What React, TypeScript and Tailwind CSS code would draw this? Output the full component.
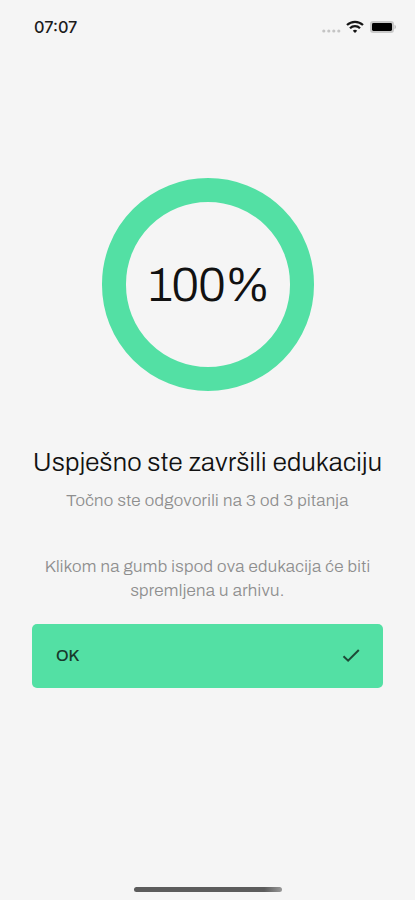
const score = { correct: 3, total: 3 };

function StatusBar() {
  return (
    <header className="flex h-[54px] items-center justify-between pl-[34px] pr-[19px]">
      <span className="font-[Inter,sans-serif] text-[16.3px] font-medium leading-none text-[#1c1c1c]">07:07</span>
      <svg className="h-[14px] w-[75px]" viewBox="0 0 75 14" fill="none">
        <g fill="#c4c4c4">
          <circle cx="2.8" cy="11" r="1.6" />
          <circle cx="7.8" cy="11" r="1.6" />
          <circle cx="12.8" cy="11" r="1.6" />
          <circle cx="17.8" cy="11" r="1.6" />
        </g>
        <path d="M26 5a11.6 11.6 0 0 1 16 0M29 8.2a7 7 0 0 1 10 0" stroke="#151515" strokeWidth="2.2" />
        <path d="M31.8 10.7a3.2 3.2 0 0 1 4.4 0L34 13z" fill="#151515" />
        <rect x="49" y="1" width="24" height="12" rx="3.2" fill="#c8c8c8" />
        <rect x="51" y="3" width="20" height="8" rx="1.4" fill="#000" />
        <path d="M73.6 4.8v4.4c1.6-.7 1.6-3.7 0-4.4" fill="#b0b0b0" />
      </svg>
    </header>
  );
}

function ScoreRing({ percent }: { percent: number }) {
  return (
    <div className="flex h-[213px] w-[212px] items-center justify-center rounded-full border-[24px] border-[#53e0a4]">
      <span className="pl-[3px] text-[48px] font-light leading-none tracking-[-0.8px] text-[#111]">{percent}%</span>
    </div>
  );
}

export default function App() {
  const percent = Math.round((score.correct / score.total) * 100);

  return (
    <div className="flex h-[900px] w-[415px] flex-col overflow-hidden bg-[#f5f5f5] font-[Archivo,'Liberation_Sans',sans-serif]">
      <StatusBar />
      <main className="flex flex-1 flex-col items-center pt-[124px]">
        <ScoreRing percent={percent} />
        <h1 className="mt-[55px] whitespace-nowrap text-[25.8px] font-light leading-8 tracking-[0.28px] text-[#111]">Uspješno ste završili edukaciju</h1>
        <p className="mt-[11px] whitespace-nowrap text-[17px] font-light leading-6 tracking-[0.29px] text-[#8e8e8e]">
          Točno ste odgovorili na {score.correct} od {score.total} pitanja
        </p>
        <p className="mt-[42px] whitespace-nowrap text-center text-[17px] font-light leading-6 tracking-[0.29px] text-[#8e8e8e]">
          Klikom na gumb ispod ova edukacija će biti
          <br />
          spremljena u arhivu.
        </p>
        <button className="mt-[21px] flex h-[64px] w-[351px] items-center justify-between rounded-[5px] bg-[#53e0a4] pl-6 pr-[23px] text-[16px] font-medium text-[#18392b]">
          OK
          <svg className="size-[18px]" viewBox="0 0 18 18" fill="none" stroke="#1d4a37" strokeWidth="2">
            <path d="M1.5 9.3l4.6 4.4L16.8 3" />
          </svg>
        </button>
      </main>
      <div className="mb-[8px] h-[5px] w-[148px] self-center rounded-full bg-linear-to-r from-[#5c5c5c] from-88% to-[#999]" />
    </div>
  );
}
